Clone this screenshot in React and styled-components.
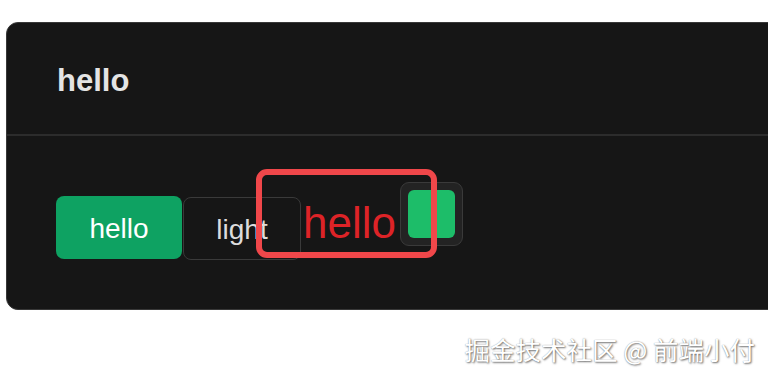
import styled, { createGlobalStyle } from 'styled-components';

const Global = createGlobalStyle`
	html, body {
		margin: 0;
		padding: 0;
		background: #ffffff;
		overflow: hidden;
		font-family: "Liberation Sans", Arial, sans-serif;
	}
`

function App() {
	return (
		<Page>
			<Global />
			<Card>
				<Header>
					<Title>hello</Title>
				</Header>
				<Body>
					<Row>
						<Button $primary $top={14}>hello</Button>
						<Button $top={15}>light</Button>
						<RedText>hello</RedText>
						<Toggle>
							<Knob />
						</Toggle>
					</Row>
					<Highlight />
				</Body>
			</Card>
			<Footer>
				<Watermark>掘金技术社区 @ 前端小付</Watermark>
			</Footer>
		</Page>
	)
}

const Page = styled.div`
	width: 768px;
	height: 378px;
	padding-top: 22px;
	padding-left: 6px;
	box-sizing: border-box;
	overflow: hidden;
`

const Card = styled.div`
	width: 800px;
	background: #161616;
	border: 1.5px solid #383838;
	border-radius: 12px;
	overflow: hidden;
`

const Header = styled.div`
	height: 113px;
	display: flex;
	align-items: center;
	padding-left: 50px;
	border-bottom: 2px solid #2c2c2c;
	box-sizing: border-box;
`

const Title = styled.h1`
	margin: 0;
	margin-top: 4px;
	font-size: 31px;
	font-weight: 700;
	color: #e4e4e4;
`

const Body = styled.div`
	position: relative;
	height: 173px;
	box-sizing: border-box;
	padding: 46px 0 0 49px;
`

const Row = styled.div`
	display: flex;
	align-items: flex-start;
`

const Button = styled.div`
	margin-top: ${p => p.$top}px;
	width: ${p => (p.$primary ? 126 : 118)}px;
	height: 63px;
	box-sizing: border-box;
	display: flex;
	align-items: center;
	justify-content: center;
	border-radius: 8px;
	font-size: 28px;
	padding-top: 3px;
	background: ${p => (p.$primary ? '#0ea262' : 'transparent')};
	border: ${p => (p.$primary ? 'none' : '1.5px solid #3a3a3a')};
	color: ${p => (p.$primary ? '#ffffff' : '#dcdcdc')};
	margin-right: 1px;
`

const RedText = styled.span`
	margin-top: 19px;
	margin-left: 1px;
	font-size: 44px;
	line-height: 1;
	color: #dd2327;
`

const Toggle = styled.div`
	width: 63px;
	height: 64px;
	box-sizing: border-box;
	margin-left: 4px;
	padding: 7px;
	background: #232323;
	border: 1.5px solid #3a3a3a;
	border-radius: 9px;
`

const Knob = styled.div`
	width: 100%;
	height: 100%;
	background: #1dbd69;
	border-radius: 6px;
`

const Highlight = styled.div`
	position: absolute;
	left: 249px;
	top: 33px;
	width: 181px;
	height: 89px;
	box-sizing: border-box;
	border: 6px solid #f0474a;
	border-radius: 11px;
`

const Footer = styled.div`
	display: flex;
	justify-content: flex-end;
	padding-right: 13px;
	margin-top: 20px;
`

const Watermark = styled.span`
	font-family: "Noto Sans CJK SC", "Liberation Sans", sans-serif;
	font-size: 25.5px;
	color: #ffffff;
	text-shadow: 1px 1px 2px rgba(0, 0, 0, 0.55), 0 0 1px rgba(0, 0, 0, 0.4);
`

export default App;
